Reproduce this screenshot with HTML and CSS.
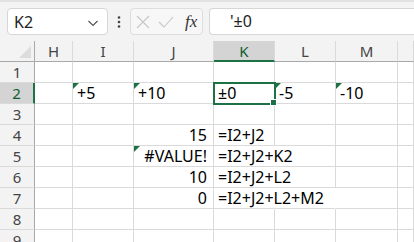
FILE: index.html
```html
<!DOCTYPE html>
<html lang="ja">
<head>
    <meta charset="UTF-8">
    <title>Sheet</title>
    <link rel="stylesheet" href="styles.css">
</head>
<body>
    <div id="bar">
        <div class="namebox">
            <span>K2</span>
            <svg width="12" height="8" viewBox="0 0 12 8"><path d="M1.5 2 L6 6.5 L10.5 2" fill="none" stroke="#555" stroke-width="1.2"/></svg>
        </div>
        <div class="dots">
            <svg width="4" height="14" viewBox="0 0 4 14"><circle cx="2" cy="2.5" r="1.3" fill="#444"/><circle cx="2" cy="7" r="1.3" fill="#444"/><circle cx="2" cy="11.5" r="1.3" fill="#444"/></svg>
        </div>
        <div class="btns">
            <svg width="14" height="14" viewBox="0 0 14 14"><path d="M1 1 L13 13 M13 1 L1 13" stroke="#c6c6c6" stroke-width="1.1"/></svg>
            <svg width="16" height="14" viewBox="0 0 16 14"><path d="M1 7 L6 12 L15 2" fill="none" stroke="#c6c6c6" stroke-width="1.1"/></svg>
            <span class="fx">fx</span>
        </div>
        <div class="formula">'±0</div>
    </div>

    <div id="sheet">
        <div class="hd corner"><i></i></div>
        <div class="hd">H</div>
        <div class="hd">I</div>
        <div class="hd">J</div>
        <div class="hd sel-col">K</div>
        <div class="hd">L</div>
        <div class="hd">M</div>
        <div class="hd"></div>

        <div class="rh">1</div>
        <div class="c"></div><div class="c"></div><div class="c"></div><div class="c"></div><div class="c"></div><div class="c"></div><div class="c"></div>

        <div class="rh sel-row">2</div>
        <div class="c"></div>
        <div class="c tri">+5</div>
        <div class="c tri">+10</div>
        <div class="c active">±0<b></b></div>
        <div class="c tri">-5</div>
        <div class="c tri">-10</div>
        <div class="c"></div>

        <div class="rh">3</div>
        <div class="c"></div><div class="c"></div><div class="c"></div><div class="c"></div><div class="c"></div><div class="c"></div><div class="c"></div>

        <div class="rh">4</div>
        <div class="c"></div><div class="c"></div>
        <div class="c num">15</div>
        <div class="c">=I2+J2</div>
        <div class="c"></div><div class="c"></div><div class="c"></div>

        <div class="rh">5</div>
        <div class="c"></div><div class="c"></div>
        <div class="c num tri">#VALUE!</div>
        <div class="c spill">=I2+J2+K2</div>
        <div class="c"></div><div class="c"></div><div class="c"></div>

        <div class="rh">6</div>
        <div class="c"></div><div class="c"></div>
        <div class="c num">10</div>
        <div class="c spill">=I2+J2+L2</div>
        <div class="c"></div><div class="c"></div><div class="c"></div>

        <div class="rh">7</div>
        <div class="c"></div><div class="c"></div>
        <div class="c num">0</div>
        <div class="c spill">=I2+J2+L2+M2</div>
        <div class="c spill"></div><div class="c"></div><div class="c"></div>

        <div class="rh">8</div>
        <div class="c"></div><div class="c"></div><div class="c"></div><div class="c"></div><div class="c"></div><div class="c"></div><div class="c"></div>

        <div class="rh">9</div>
        <div class="c"></div><div class="c"></div><div class="c"></div><div class="c"></div><div class="c"></div><div class="c"></div><div class="c"></div>
    </div>
</body>
</html>
```

FILE: styles.css
```css
*{
    margin: 0;
    padding: 0;
    box-sizing: border-box;
}
body {
    width: 414px;
    height: 242px;
    overflow: hidden;
    background: #fff;
    font-family: "Noto Sans", "Noto Sans CJK JP", sans-serif;
    color: #000;
}
#bar {
    height: 41px;
    background: #f3f3f3;
    border-top: 2px solid #e2e2e2;
    display: flex;
    align-items: flex-start;
    padding: 6px 0 0 7px;
}
.namebox {
    width: 101px;
    height: 27px;
    background: #fff;
    border: 1px solid #d6d6d6;
    border-radius: 4px;
    display: flex;
    align-items: center;
    justify-content: space-between;
    padding: 0 8px 0 6px;
    font-size: 16px;
    color: #222;
}
.namebox svg {
    margin-top: 2px;
}
.dots {
    width: 22px;
    height: 27px;
    display: flex;
    align-items: center;
    justify-content: center;
}
.btns {
    width: 73px;
    height: 27px;
    border: 1px solid #dedede;
    border-radius: 4px;
    display: flex;
    align-items: center;
    gap: 8px;
    padding-left: 5px;
    background: #f7f7f7;
}
.fx {
    font-family: "Liberation Serif", serif;
    font-style: italic;
    font-size: 17px;
    color: #333;
    margin-left: 3px;
}
.formula {
    flex: 1;
    height: 27px;
    margin-left: 6px;
    background: #fff;
    border: 1px solid #d6d6d6;
    border-right: none;
    border-radius: 4px 0 0 4px;
    font-size: 16px;
    line-height: 25px;
    padding-left: 20px;
    color: #222;
}
#sheet {
    display: grid;
    grid-template-columns: 35px 38px 61px 80px 61px 61px 62px 1fr;
    grid-template-rows: 21px repeat(9, 21px);
    font-size: 16px;
}
.hd, .rh {
    background: #f3f3f3;
    color: #444;
    text-align: center;
    line-height: 20px;
    font-size: 15px;
    border-right: 1px solid #dadada;
    border-bottom: 1px solid #a9a9a9;
}
.rh {
    border-right: 1px solid #a9a9a9;
    border-bottom: 1px solid #dadada;
}
.corner {
    position: relative;
    border-right: 1px solid #a9a9a9;
}
.corner i {
    position: absolute;
    right: 3px;
    bottom: 3px;
    width: 0;
    height: 0;
    border-left: 12px solid transparent;
    border-bottom: 12px solid #dcdcdc;
}
.sel-col {
    background: #d4d4d4;
    color: #0e5c2f;
    border-bottom: 2px solid #1e7145;
}
.sel-row {
    background: #d4d4d4;
    color: #0e5c2f;
    border-right: 2px solid #1e7145;
}
.c {
    position: relative;
    border-right: 1px solid #dadada;
    border-bottom: 1px solid #dadada;
    line-height: 21px;
    padding: 0 4px;
    white-space: nowrap;
}
.num {
    text-align: right;
    padding-right: 6px;
}
.spill {
    border-right-color: transparent;
}
.tri::before {
    content: "";
    position: absolute;
    left: 0;
    top: 0;
    border-top: 6px solid #1e7145;
    border-right: 6px solid transparent;
}
.active {
    outline: 2px solid #1e7145;
    outline-offset: -1px;
    z-index: 2;
}
.active b {
    position: absolute;
    right: -3px;
    bottom: -3px;
    width: 5px;
    height: 5px;
    background: #1e7145;
    border: 1px solid #fff;
    box-sizing: content-box;
}
```
